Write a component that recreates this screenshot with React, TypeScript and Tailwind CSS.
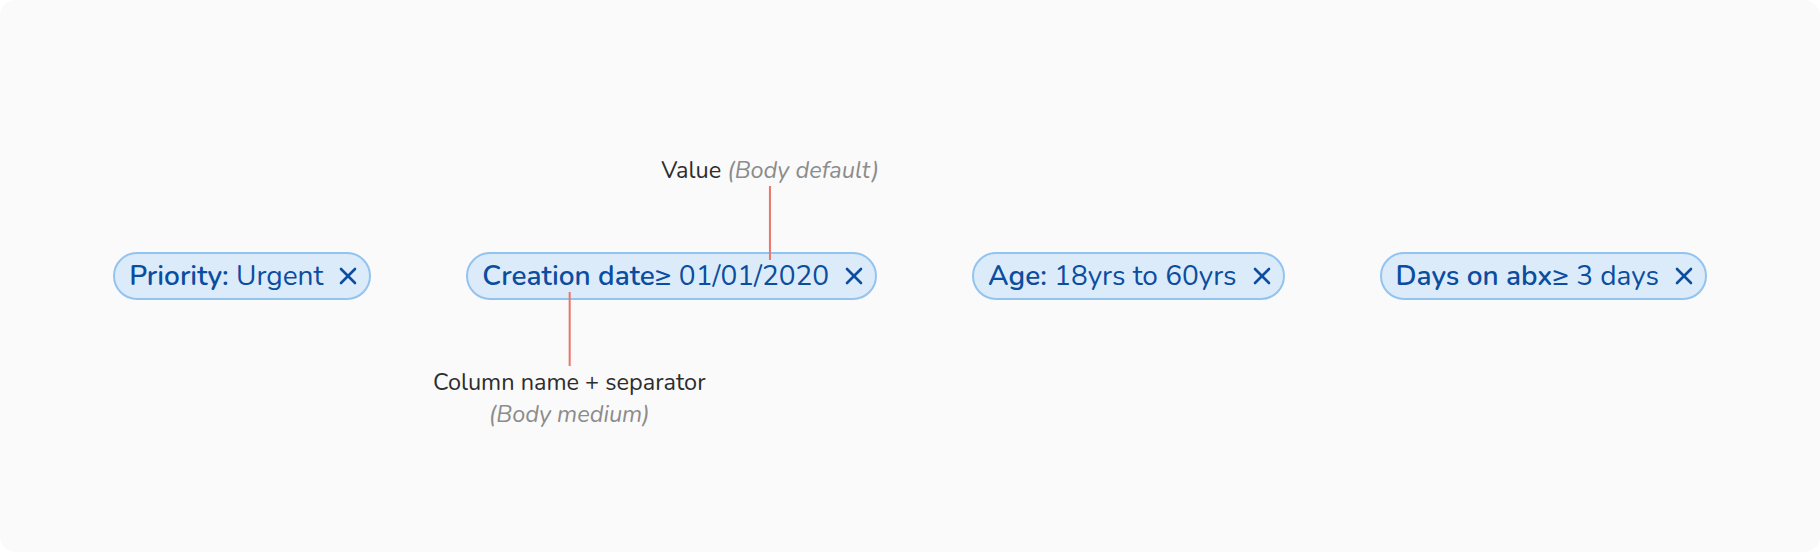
const chips = [
  { name: "Priority:", value: "Urgent" },
  { name: "Creation date≥", value: "01/01/2020", annotated: true },
  { name: "Age:", value: "18yrs to 60yrs" },
  { name: "Days on abx≥", value: "3 days" },
];

function CloseIcon() {
  return (
    <svg className="h-[18px] w-[18px] shrink-0" viewBox="0 0 18 18" fill="none" stroke="currentColor" strokeWidth={2.6} strokeLinecap="round">
      <line x1="2" y1="2" x2="16" y2="16" />
      <line x1="16" y1="2" x2="2" y2="16" />
    </svg>
  );
}

function Chip({ name, value }: { name: string; value: string }) {
  return (
    <div className="flex h-[48px] items-center gap-4 whitespace-nowrap rounded-full border-2 border-[#93c3ef] bg-[#dcebfa] pl-[14px] pr-[12px] text-[28px] text-[#0b4d9f]">
      <span>
        <span className="font-semibold">{name}</span> {value}
      </span>
      <CloseIcon />
    </div>
  );
}

export default function App() {
  return (
    <div className="bg-white" style={{ fontFamily: '"Nunito", "Noto Sans", sans-serif' }}>
      <div className="flex h-[552px] items-center justify-center gap-[95px] rounded-2xl bg-[#fafafa]">
        {chips.map((c, i) =>
          c.annotated ? (
            <div key={i} className="relative">
              {/* Value annotation */}
              <div className="absolute bottom-[calc(100%-8px)] left-[304px] flex -translate-x-1/2 flex-col items-center">
                <span className="whitespace-nowrap text-[23.5px] leading-[32px] text-[#2d2d2d]">
                  Value <span className="italic text-[#8c8c8c]">(Body default)</span>
                </span>
                <div className="h-[74px] w-[2px] bg-[#ec7468]" />
              </div>
              <Chip name={c.name} value={c.value} />
              {/* Column name annotation */}
              <div className="absolute left-[103px] top-[calc(100%-8px)] flex -translate-x-1/2 flex-col items-center">
                <div className="h-[74px] w-[2px] bg-[#ec7468]" />
                <span className="whitespace-nowrap text-[23.5px] leading-[32px] text-[#2d2d2d]">Column name + separator</span>
                <span className="whitespace-nowrap text-[23.5px] italic leading-[32px] text-[#8c8c8c]">(Body medium)</span>
              </div>
            </div>
          ) : (
            <Chip key={i} name={c.name} value={c.value} />
          )
        )}
      </div>
    </div>
  );
}
